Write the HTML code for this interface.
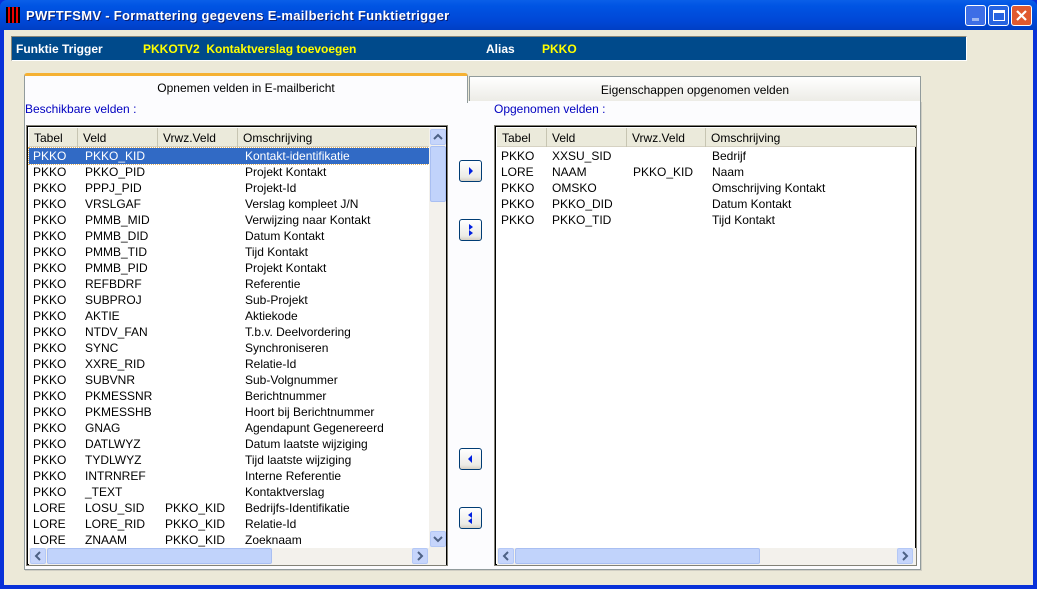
<!DOCTYPE html>
<html><head><style>
*{margin:0;padding:0;box-sizing:border-box}
body{width:1037px;height:589px;overflow:hidden;font-family:"Liberation Sans","DejaVu Sans",sans-serif;font-size:12px;background:#0831d9;position:relative}
.abs{position:absolute}
#title{left:0;top:0;width:1037px;height:30px;background:linear-gradient(#0a5fe8,#0054e3 20%,#0047d6 70%,#003fc4);border-radius:7px 7px 0 0}
#title .t{left:26px;top:8px;color:#fff;font-weight:bold;font-size:13px;text-shadow:1px 1px #0a1e6e;letter-spacing:.3px}
#client{left:4px;top:30px;width:1029px;height:555px;background:#ece9d8}
.wb{top:5px;width:21px;height:21px;border:1px solid #fff;border-radius:3px;background:#2663e0}
#hdr{left:11px;top:36px;width:956px;height:25px;background:#004a8b;border:1px solid #fff;border-top-color:#8a877a;border-left-color:#8a877a}
#hdr span{position:absolute;top:5px;font-weight:bold;color:#fff}
#hdr .y{color:#ffff00}
.tab{border:1px solid #919b9c;border-bottom:none;background:linear-gradient(#fff,#ecebe5)}
#panel{left:24px;top:101px;width:897px;height:469px;background:#fcfcfe;border:1px solid #919b9c;border-top:none;box-shadow:1px 1px 0 #d0cec3}
.lbl{color:#0000c0}
.list{background:#fff;border:1px solid #828177;outline:1px solid #000;outline-offset:-2px;overflow:hidden}
.hrow{position:absolute;left:2px;top:2px;height:19px;background:#ebeadb;border-bottom:1px solid #d6d2c2}
.hcell{position:absolute;top:0;height:19px;padding:3px 0 0 5px;border-right:1px solid #c7c5b2;color:#000}
.row{position:absolute;height:16px;white-space:nowrap}
.row span{position:absolute;top:1px}
.sel{background:#316ac5;color:#fff;outline:1px dotted #e0b060}
.btn{width:23px;height:22px;border:1px solid #003c74;border-radius:3px;background:linear-gradient(#fff,#ecebe6 80%,#d6d0c5)}
.sb{background:#f3f1ec}
.thumb{background:#c1d3fb;border:1px solid #a9bff2;border-radius:2px}
.arr{width:16px;height:16px;background:#c6d5fb;border:1px solid #b4c8f6;border-radius:2px}
</style></head><body>
<div id="title" class="abs">
 <div class="abs" style="left:6px;top:7px;width:14px;height:16px;background:#000"></div>
 <div class="abs" style="left:8px;top:7px;width:2px;height:16px;background:#e00"></div>
 <div class="abs" style="left:12px;top:7px;width:2px;height:16px;background:#e00"></div>
 <div class="abs" style="left:16px;top:7px;width:2px;height:16px;background:#e00"></div>
 <div class="abs t">PWFTFSMV - Formattering gegevens E-mailbericht Funktietrigger</div>
 <div class="abs wb" style="left:965px;background:#3d6ee6"><div class="abs" style="left:6px;top:12px;width:7px;height:3px;background:#9db7f2"></div></div>
 <div class="abs wb" style="left:988px"><div class="abs" style="left:4px;top:4px;width:12px;height:11px;border:1px solid #fff;border-top-width:3px"></div></div>
 <div class="abs wb" style="left:1011px;background:#e05a30"><svg width="19" height="19"><path d="M5 5l9 9M14 5l-9 9" stroke="#fff" stroke-width="2.2"/></svg></div>
</div>
<div id="client" class="abs"></div>
<div id="hdr" class="abs">
 <span style="left:4px">Funktie Trigger</span>
 <span class="y" style="left:131px">PKKOTV2&nbsp; Kontaktverslag toevoegen</span>
 <span style="left:474px">Alias</span>
 <span class="y" style="left:530px">PKKO</span>
</div>
<div class="abs tab" style="left:469px;top:76px;width:452px;height:26px;text-align:center;padding-top:6px">Eigenschappen opgenomen velden</div>
<div id="panel" class="abs"></div>
<div class="abs" style="left:24px;top:73px;width:444px;height:30px;background:#fcfcfe;border:1px solid #919b9c;border-bottom:none;border-top:3px solid #f5b133;border-radius:3px 3px 0 0;text-align:center;padding-top:5px">Opnemen velden in E-mailbericht</div>
<div class="abs lbl" style="left:25px;top:102px">Beschikbare velden :</div>
<div class="abs lbl" style="left:494px;top:102px">Opgenomen velden :</div>

<div class="abs list" style="left:26px;top:125px;width:422px;height:441px">
 <div class="hrow" style="width:400px">
  <div class="hcell" style="left:0;width:49px">Tabel</div>
  <div class="hcell" style="left:49px;width:80px">Veld</div>
  <div class="hcell" style="left:129px;width:80px">Vrwz.Veld</div>
  <div class="hcell" style="left:209px;width:191px;border:none">Omschrijving</div>
 </div>
 <div id="L"></div>
 <div class="abs sb" style="left:402px;top:2px;width:17px;height:420px"></div>
 <div class="abs arr" style="left:403px;top:3px"><svg width="14" height="14"><path d="M3 9l4-4 4 4" stroke="#4d6185" stroke-width="2" fill="none"/></svg></div>
 <div class="abs thumb" style="left:403px;top:20px;width:16px;height:56px"></div>
 <div class="abs arr" style="left:403px;top:405px"><svg width="14" height="14"><path d="M3 5l4 4 4-4" stroke="#4d6185" stroke-width="2" fill="none"/></svg></div>
 <div class="abs sb" style="left:2px;top:422px;width:417px;height:17px"></div>
 <div class="abs arr" style="left:3px;top:422px"><svg width="14" height="14"><path d="M9 3l-4 4 4 4" stroke="#4d6185" stroke-width="2" fill="none"/></svg></div>
 <div class="abs thumb" style="left:20px;top:422px;width:225px;height:16px"></div>
 <div class="abs arr" style="left:385px;top:422px"><svg width="14" height="14"><path d="M5 3l4 4-4 4" stroke="#4d6185" stroke-width="2" fill="none"/></svg></div>
</div>

<div class="abs list" style="left:494px;top:125px;width:423px;height:441px">
 <div class="hrow" style="width:419px">
  <div class="hcell" style="left:0;width:50px">Tabel</div>
  <div class="hcell" style="left:50px;width:80px">Veld</div>
  <div class="hcell" style="left:130px;width:79px">Vrwz.Veld</div>
  <div class="hcell" style="left:209px;width:210px;border:none">Omschrijving</div>
 </div>
 <div id="R"></div>
 <div class="abs sb" style="left:2px;top:422px;width:419px;height:17px"></div>
 <div class="abs arr" style="left:3px;top:422px"><svg width="14" height="14"><path d="M9 3l-4 4 4 4" stroke="#4d6185" stroke-width="2" fill="none"/></svg></div>
 <div class="abs thumb" style="left:20px;top:422px;width:245px;height:16px"></div>
 <div class="abs arr" style="left:402px;top:422px"><svg width="14" height="14"><path d="M5 3l4 4-4 4" stroke="#4d6185" stroke-width="2" fill="none"/></svg></div>
</div>

<div class="abs btn" style="left:459px;top:160px"><svg width="21" height="20"><path d="M9 6v8l4-4z" fill="#0020e0"/></svg></div>
<div class="abs btn" style="left:459px;top:219px"><svg width="21" height="20"><path d="M9 4v6l4-3zM9 10v6l4-3z" fill="#0020e0"/></svg></div>
<div class="abs btn" style="left:459px;top:448px"><svg width="21" height="20"><path d="M12 6v8l-4-4z" fill="#0020e0"/></svg></div>
<div class="abs btn" style="left:459px;top:507px"><svg width="21" height="20"><path d="M12 4v6l-4-3zM12 10v6l-4-3z" fill="#0020e0"/></svg></div>

<script>
var L=[["PKKO","PKKO_KID","","Kontakt-identifikatie"],["PKKO","PKKO_PID","","Projekt Kontakt"],["PKKO","PPPJ_PID","","Projekt-Id"],["PKKO","VRSLGAF","","Verslag kompleet J/N"],["PKKO","PMMB_MID","","Verwijzing naar Kontakt"],["PKKO","PMMB_DID","","Datum Kontakt"],["PKKO","PMMB_TID","","Tijd Kontakt"],["PKKO","PMMB_PID","","Projekt Kontakt"],["PKKO","REFBDRF","","Referentie"],["PKKO","SUBPROJ","","Sub-Projekt"],["PKKO","AKTIE","","Aktiekode"],["PKKO","NTDV_FAN","","T.b.v. Deelvordering"],["PKKO","SYNC","","Synchroniseren"],["PKKO","XXRE_RID","","Relatie-Id"],["PKKO","SUBVNR","","Sub-Volgnummer"],["PKKO","PKMESSNR","","Berichtnummer"],["PKKO","PKMESSHB","","Hoort bij Berichtnummer"],["PKKO","GNAG","","Agendapunt Gegenereerd"],["PKKO","DATLWYZ","","Datum laatste wijziging"],["PKKO","TYDLWYZ","","Tijd laatste wijziging"],["PKKO","INTRNREF","","Interne Referentie"],["PKKO","_TEXT","","Kontaktverslag"],["LORE","LOSU_SID","PKKO_KID","Bedrijfs-Identifikatie"],["LORE","LORE_RID","PKKO_KID","Relatie-Id"],["LORE","ZNAAM","PKKO_KID","Zoeknaam"]];
var R=[["PKKO","XXSU_SID","","Bedrijf"],["LORE","NAAM","PKKO_KID","Naam"],["PKKO","OMSKO","","Omschrijving Kontakt"],["PKKO","PKKO_DID","","Datum Kontakt"],["PKKO","PKKO_TID","","Tijd Kontakt"]];
function f(id,d,xs,w){var h="";d.forEach(function(r,i){h+='<div class="row'+(id=="L"&&i==0?' sel':'')+'" style="left:2px;top:'+(22+i*16)+'px;width:'+w+'px">';r.forEach(function(c,j){h+='<span style="left:'+xs[j]+'px">'+c+'</span>'});h+='</div>'});document.getElementById(id).innerHTML=h}
f("L",L,[4,56,136,216],400);f("R",R,[4,55,136,215],0);
</script>
</body></html>
